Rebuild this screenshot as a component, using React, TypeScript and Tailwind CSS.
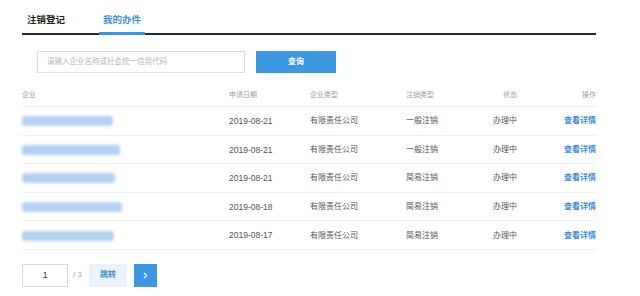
import { ChevronRight } from 'lucide-react';

const ROWS = [
  { w: 91, date: '2019-08-21', kind: '有限责任公司', cancel: '一般注销', status: '办理中' },
  { w: 98, date: '2019-08-21', kind: '有限责任公司', cancel: '一般注销', status: '办理中' },
  { w: 93, date: '2019-08-21', kind: '有限责任公司', cancel: '简易注销', status: '办理中' },
  { w: 100, date: '2019-08-18', kind: '有限责任公司', cancel: '简易注销', status: '办理中' },
  { w: 92, date: '2019-08-17', kind: '有限责任公司', cancel: '简易注销', status: '办理中' },
];

const COLS = 'grid grid-cols-[207px_81px_96px_51px_60px_79px] items-center';

export default function App() {
  return (
    <div className="w-[640px] h-[296px] bg-white font-['Liberation_Sans','Noto_Sans_CJK_SC',sans-serif] overflow-hidden">
      <div className="ml-[22px] w-[574px]">
        {/* Tabs */}
        <div className="flex items-end h-[35px] border-b-2 border-[#1f2c38]">
          <div className="pl-[5px] w-[77px] pb-[6px] text-[9.5px] font-bold text-[#222]">注销登记</div>
          <div className="px-[4px] pb-[5px] -mb-[2px] border-b-[3px] border-[#3d93dc] text-[9.5px] font-bold text-[#3d8fd8]">
            我的办件
          </div>
        </div>

        {/* Search */}
        <div className="flex mt-[16px] ml-[15px] gap-[11px]">
          <div className="w-[208px] h-[22px] border border-[#dedede] flex items-center px-[9px] text-[7.5px] text-[#b8b8b8]">
            请输入企业名称或社会统一信用代码
          </div>
          <div className="w-[80px] h-[22px] bg-[#3d96e0] flex items-center justify-center text-[8px] font-bold text-white">
            查询
          </div>
        </div>

        {/* Table */}
        <div className={`${COLS} mt-[13px] h-[21px] border-b border-[#f0f0f0] text-[7px] text-[#a0a0a0] pb-[2px]`}>
          <div>企业</div>
          <div>申请日期</div>
          <div>企业类型</div>
          <div>注销类型</div>
          <div className="text-right">状态</div>
          <div className="text-right">操作</div>
        </div>
        {ROWS.map((r, i) => (
          <div key={i} className={`${COLS} h-[28.6px] border-b border-[#f0f0f0] text-[8px] text-[#555] pt-[1px]`}>
            <div className="flex items-center">
              <div className="h-[10px] rounded-[3px] bg-[#b3d1f2] blur-[1.5px]" style={{ width: r.w }} />
            </div>
            <div className="text-[8.5px]">{r.date}</div>
            <div>{r.kind}</div>
            <div className="whitespace-nowrap">{r.cancel}</div>
            <div className="text-right">{r.status}</div>
            <div className="text-right font-bold text-[#3a8ad6] whitespace-nowrap">查看详情</div>
          </div>
        ))}

        {/* Pager */}
        <div className="flex items-center mt-[14px]">
          <div className="w-[46px] h-[23px] border border-[#dcdcdc] flex items-center justify-center text-[8.5px] text-[#333]">
            1
          </div>
          <div className="ml-[5px] w-[15px] text-[8px] text-[#aaa]">/ 3</div>
          <div className="ml-[1px] w-[38px] h-[23px] bg-[#eaf3fc] flex items-center justify-center text-[8px] font-bold text-[#3d8fd8]">
            跳转
          </div>
          <div className="ml-[7px] w-[23px] h-[23px] bg-[#3d96e0] flex items-center justify-center text-white">
            <ChevronRight size={9} strokeWidth={3.5} />
          </div>
        </div>
      </div>
    </div>
  );
}
